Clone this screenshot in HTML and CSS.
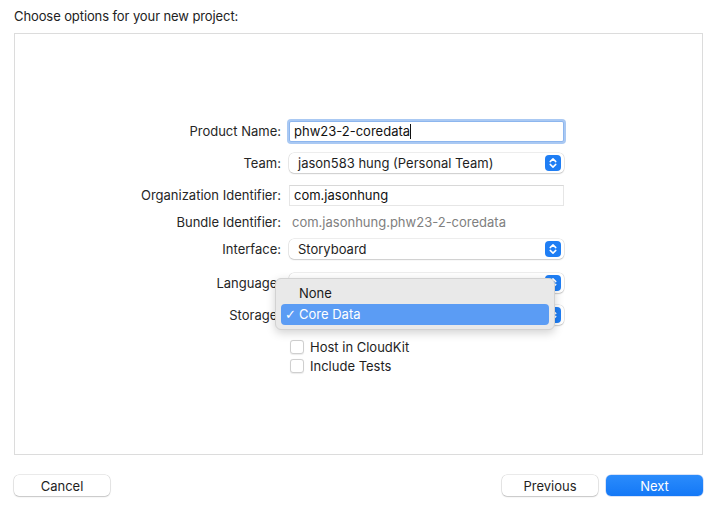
FILE: index.html
```html
<!DOCTYPE html>
<html>
<head>
<meta charset="utf-8">
<link rel="stylesheet" href="styles.css">
</head>
<body>
<div class="title">Choose options for your new project:</div>
<div class="panel">
  <div class="form">
    <div class="row r1">
      <div class="label">Product Name:</div>
      <div class="field"><div class="textfield focus">phw23-2-coredata<span class="caret"></span></div></div>
    </div>
    <div class="row r2">
      <div class="label">Team:</div>
      <div class="field"><div class="popup"><span>jason583 hung (Personal Team)</span><svg class="stepper" viewBox="0 0 16 16"><rect width="16" height="16" rx="4" fill="#1f7ef4"/><path d="M5.2 6.6 8 3.9 10.8 6.6M5.2 9.4 8 12.1 10.8 9.4" fill="none" stroke="#fff" stroke-width="1.5" stroke-linecap="round" stroke-linejoin="round"/></svg></div></div>
    </div>
    <div class="row r3">
      <div class="label">Organization Identifier:</div>
      <div class="field"><div class="textfield plain">com.jasonhung</div></div>
    </div>
    <div class="row r4">
      <div class="label">Bundle Identifier:</div>
      <div class="field"><div class="static">com.jasonhung.phw23-2-coredata</div></div>
    </div>
    <div class="row r5">
      <div class="label">Interface:</div>
      <div class="field"><div class="popup"><span>Storyboard</span><svg class="stepper" viewBox="0 0 16 16"><rect width="16" height="16" rx="4" fill="#1f7ef4"/><path d="M5.2 6.6 8 3.9 10.8 6.6M5.2 9.4 8 12.1 10.8 9.4" fill="none" stroke="#fff" stroke-width="1.5" stroke-linecap="round" stroke-linejoin="round"/></svg></div></div>
    </div>
    <div class="row r6">
      <div class="label">Language:</div>
      <div class="field">
        <div class="popup"><span></span><svg class="stepper" viewBox="0 0 16 16"><rect width="16" height="16" rx="4" fill="#1f7ef4"/><path d="M5.2 6.6 8 3.9 10.8 6.6M5.2 9.4 8 12.1 10.8 9.4" fill="none" stroke="#fff" stroke-width="1.5" stroke-linecap="round" stroke-linejoin="round"/></svg></div>
        <div class="menu">
          <div class="item">None</div>
          <div class="item selected"><span class="check">✓</span>Core Data</div>
        </div>
      </div>
    </div>
    <div class="row r7">
      <div class="label">Storage:</div>
      <div class="field"><div class="popup"><span></span><svg class="stepper" viewBox="0 0 16 16"><rect width="16" height="16" rx="4" fill="#1f7ef4"/><path d="M5.2 6.6 8 3.9 10.8 6.6M5.2 9.4 8 12.1 10.8 9.4" fill="none" stroke="#fff" stroke-width="1.5" stroke-linecap="round" stroke-linejoin="round"/></svg></div></div>
    </div>
    <div class="row r8">
      <div class="label"></div>
      <div class="field"><label class="cb"><span class="box"></span>Host in CloudKit</label></div>
    </div>
    <div class="row r9">
      <div class="label"></div>
      <div class="field"><label class="cb"><span class="box"></span>Include Tests</label></div>
    </div>
  </div>
</div>
<div class="footer">
  <button class="btn">Cancel</button>
  <div class="right">
    <button class="btn">Previous</button>
    <button class="btn primary">Next</button>
  </div>
</div>
</body>
</html>
```

FILE: styles.css
```css
html, body {
  margin: 0;
  padding: 0;
  background: #ffffff;
}
body {
  font-family: "Inter", "Liberation Sans", sans-serif;
  font-size: 13px;
  color: #1e1e1e;
  width: 720px;
  height: 513px;
  overflow: hidden;
}
.title {
  padding: 8px 0 0 14px;
  line-height: 16px;
  height: 16px;
  margin-bottom: 9px;
  color: #222;
  letter-spacing: -0.1px;
}
.panel {
  margin: 0 17px 0 14px;
  height: 422px;
  border: 1px solid #dcdcdc;
  box-sizing: border-box;
}
.form {
  padding-top: 86px;
  display: flex;
  flex-direction: column;
}
.row {
  display: flex;
  align-items: center;
  height: 22px;
}
.r2, .r3 { margin-top: 10px; }
.r4, .r5 { margin-top: 5px; }
.r6 { margin-top: 12px; }
.r7 { margin-top: 10px; }
.r8 { margin-top: 12px; height: 18px; }
.r9 { margin-top: 1px; height: 18px; }
.label {
  width: 266px;
  text-align: right;
  color: #262626;
  flex: none;
}
.field {
  margin-left: 8px;
  width: 275px;
  position: relative;
  flex: none;
}
.textfield {
  height: 21px;
  box-sizing: border-box;
  padding-left: 5px;
  line-height: 21px;
  color: #111;
  background: #fff;
}
.textfield.focus {
  border: 1px solid #8db6ee;
  box-shadow: 0 0 0 2px #aac9f3;
  border-radius: 2px;
  line-height: 19px;
  padding-left: 4px;
}
.caret {
  display: inline-block;
  width: 1px;
  height: 15px;
  background: #111;
  vertical-align: -3px;
}
.textfield.plain {
  border: 1px solid #e6e6e6;
  border-top-color: #d8d8d8;
  line-height: 19px;
  padding-left: 4px;
}
.static {
  padding-left: 3px;
  color: #808080;
}
.popup {
  height: 20px;
  box-sizing: border-box;
  border-radius: 5px;
  background: #fff;
  box-shadow: 0 0 0 0.5px rgba(0,0,0,0.14), 0 1px 1.5px rgba(0,0,0,0.14);
  display: flex;
  align-items: center;
  justify-content: space-between;
  padding: 0 3px 0 9px;
}
.stepper {
  width: 16px;
  height: 16px;
  display: block;
}
.menu {
  position: absolute;
  left: -14px;
  top: 5px;
  width: 280px;
  height: 52px;
  box-sizing: border-box;
  background: #e9e9e9;
  border: 1px solid #d2d2d2;
  border-radius: 6px;
  box-shadow: 0 3px 10px rgba(0,0,0,0.18);
  padding: 4px 5px;
  z-index: 5;
}
.item {
  height: 21px;
  line-height: 21px;
  padding-left: 18px;
  border-radius: 4px;
  color: #1a1a1a;
}
.item.selected {
  background: #5b9cf4;
  color: #fff;
  padding-left: 4px;
}
.check {
  display: inline-block;
  width: 14px;
  font-family: "DejaVu Sans", sans-serif;
  font-size: 13px;
}
.cb {
  display: flex;
  align-items: center;
  padding-left: 1px;
  color: #1e1e1e;
}
.box {
  width: 12px;
  height: 12px;
  border: 1px solid #cfcfcf;
  border-radius: 3px;
  background: #fff;
  box-shadow: 0 0.5px 1px rgba(0,0,0,0.08);
  margin-right: 6px;
}
.footer {
  margin: 20px 17px 0 14px;
  display: flex;
  justify-content: space-between;
}
.right {
  display: flex;
  gap: 8px;
}
.btn {
  width: 96px;
  height: 21px;
  font-family: inherit;
  font-size: 13px;
  color: #1e1e1e;
  background: #fff;
  border: none;
  border-radius: 5px;
  box-shadow: 0 0 0 0.5px rgba(0,0,0,0.16), 0 1px 1.5px rgba(0,0,0,0.16);
  padding: 0;
}
.btn.primary {
  width: 97px;
  background: linear-gradient(#2b8cfc, #1478f6);
  color: #fff;
  box-shadow: 0 0 0 0.5px rgba(0,70,200,0.3);
}
```
